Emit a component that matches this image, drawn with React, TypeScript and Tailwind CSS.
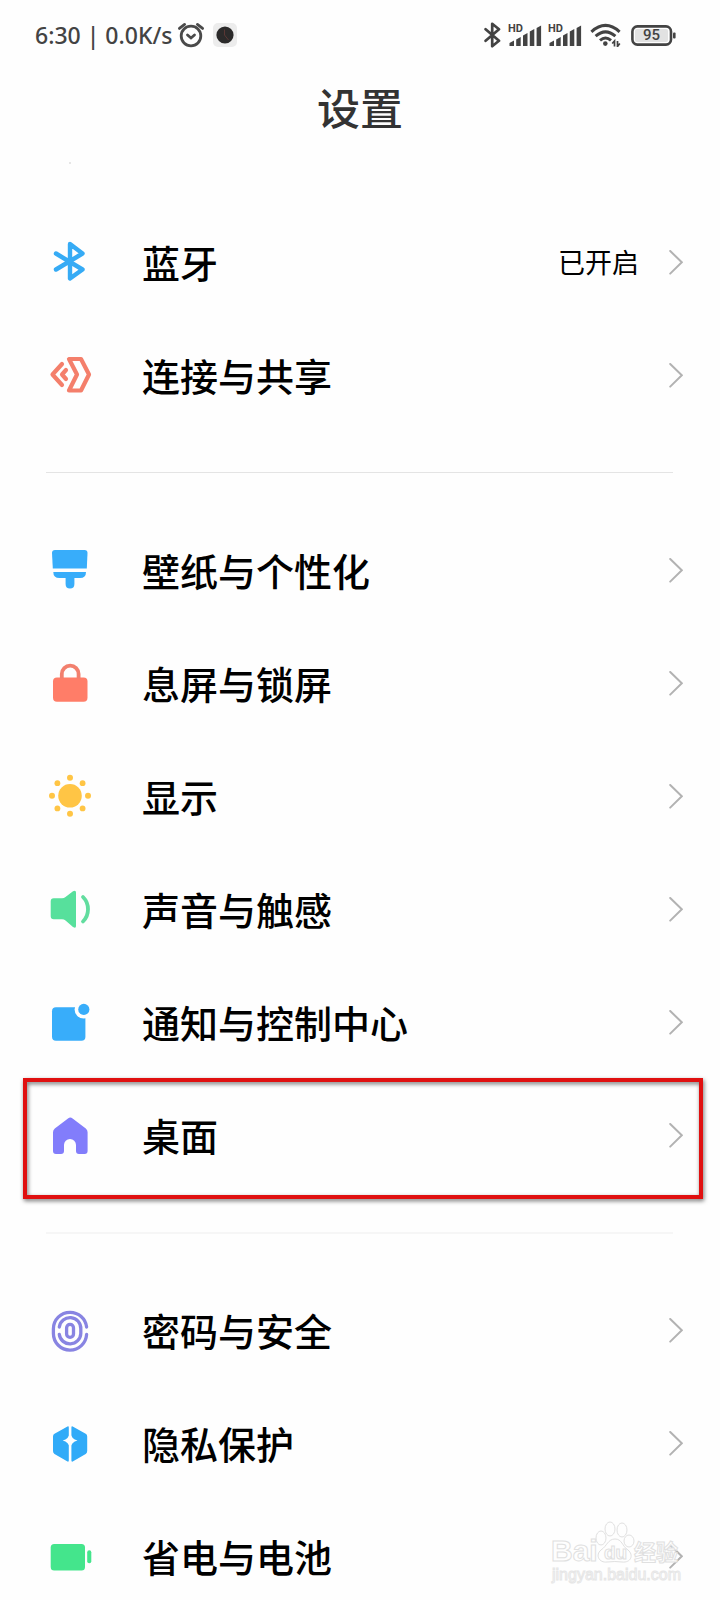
import type { ReactNode } from "react";

type Item = {
  label: string;
  icon: ReactNode;
  value?: string;
  marked?: boolean;
};

// every icon is drawn on the same 44x45 canvas
const bluetooth = (
  <path
    d="M8 13.5 34.5 29.5 22 38.5V4L34.5 13.5 8 29.5"
    fill="none"
    stroke="#36abf5"
    strokeWidth="4.4"
    strokeLinecap="round"
    strokeLinejoin="round"
  />
);

const share = (
  <g
    fill="none"
    stroke="#f47f6b"
    strokeWidth="4.2"
    strokeLinecap="round"
    strokeLinejoin="round"
  >
    <path d="M21 6H33L41 21.5 33 37.5H21L29 21.5Z" />
    <path d="M14 11 4.5 21.5 14 32" />
    <path d="M18 17 14 21.5 18 26" />
  </g>
);

const brush = (
  <g fill="#38adfa">
    <path d="M7 2H36.5Q39.5 2 39.5 5L38.8 20.5H4.8L4 5Q4 2 7 2Z" />
    <path d="M5.3 24H38Q38 30 32 30H26.4V36Q26.4 40.5 22 40.5T17.6 36V30H11.5Q5.3 30 5.3 24Z" />
  </g>
);

const lock = (
  <g>
    <rect x="5" y="16.5" width="34.5" height="24.3" rx="4" fill="#ff7d68" />
    <path
      d="M13.8 17.5V13A8.4 8.4 0 0 1 30.6 13V17.5"
      fill="none"
      stroke="#f2806e"
      strokeWidth="3.8"
    />
  </g>
);

const sun = (
  <g fill="#ffc545">
    <circle cx="22" cy="21.8" r="11.8" />
    <circle cx="22" cy="3.8" r="3" />
    <circle cx="22" cy="39.8" r="3" />
    <circle cx="4" cy="21.8" r="3" />
    <circle cx="40" cy="21.8" r="3" />
    <circle cx="9.4" cy="9.2" r="2.9" />
    <circle cx="34.6" cy="9.2" r="2.9" />
    <circle cx="9.4" cy="34.4" r="2.9" />
    <circle cx="34.6" cy="34.4" r="2.9" />
  </g>
);

const speaker = (
  <g>
    <path
      d="M5.7 11.3H14Q16 11.3 17.5 10L25 4.3Q28 2.8 28 5.5V39Q28 42 25 40L17.5 33.5Q16 32.3 14 32.3H5.7Q2.7 32.3 2.7 29.3V14.3Q2.7 11.3 5.7 11.3Z"
      fill="#57e09c"
    />
    <path
      d="M35 10Q40 15 40 22.3T35 34.5"
      fill="none"
      stroke="#62dd9f"
      strokeWidth="3.8"
      strokeLinecap="round"
    />
  </g>
);

const notification = (
  <g>
    <rect x="4" y="7.3" width="33.4" height="33.4" rx="4" fill="#38adfa" />
    <circle cx="35.8" cy="9.4" r="9.2" fill="#fefefe" />
    <circle cx="35.8" cy="9.4" r="5.6" fill="#38adfa" />
  </g>
);

const home = (
  <path
    d="M20 5.4Q22.3 3.8 24.6 5.4L37.8 15.4Q39.6 16.8 39.6 19.3V38Q39.6 41 36.6 41H31Q28 41 28 38V32A6 6 0 0 0 16 32V38Q16 41 13 41H8Q5 41 5 38V19.3Q5 16.8 6.8 15.4Z"
    fill="#827dfb"
  />
);

const fingerprint = (
  <g fill="none" stroke="#8884e2" strokeWidth="3.3" strokeLinecap="round">
    <path d="M38.6 19A16.6 16.6 0 0 0 22 4.3 16.6 16.6 0 0 0 5.4 20.9V25.5A16.6 16.6 0 0 0 22 42.1 16.6 16.6 0 0 0 38.6 26.5" />
    <path d="M11.3 19A10.8 10.8 0 0 1 32.8 20.9V25.5A10.8 10.8 0 0 1 11.3 26.5" />
    <rect x="18.6" y="16.3" width="6.9" height="13" rx="3.4" />
  </g>
);

const privacy = (
  <g>
    <path
      d="M19.5 5.5 6.5 12.7Q5 13.5 5 15.5V30Q5 32 6.5 32.9L19.5 40.5Q20.8 41.1 20.8 39.5V6.5Q20.8 4.9 19.5 5.5Z"
      fill="#31abf8"
    />
    <path
      d="M24.7 5.5 37.7 12.7Q39.2 13.5 39.2 15.5V30Q39.2 32 37.7 32.9L24.7 40.5Q23.4 41.1 23.4 39.5V6.5Q23.4 4.9 24.7 5.5Z"
      fill="#31abf8"
    />
    <path
      d="M22.1 11.5Q23.4 18.1 29.5 19.5 23.4 20.9 22.1 27.5 20.8 20.9 14.7 19.5 20.8 18.1 22.1 11.5Z"
      fill="#fefefe"
    />
  </g>
);

const battery = (
  <g fill="#44e58c">
    <rect x="2.7" y="10" width="34.3" height="26.6" rx="3.5" />
    <rect x="39.2" y="16.3" width="4.1" height="13" rx="2" />
  </g>
);

const groups: Item[][] = [
  [
    { label: "蓝牙", icon: bluetooth, value: "已开启" },
    { label: "连接与共享", icon: share },
  ],
  [
    { label: "壁纸与个性化", icon: brush },
    { label: "息屏与锁屏", icon: lock },
    { label: "显示", icon: sun },
    { label: "声音与触感", icon: speaker },
    { label: "通知与控制中心", icon: notification },
    { label: "桌面", icon: home, marked: true },
  ],
  [
    { label: "密码与安全", icon: fingerprint },
    { label: "隐私保护", icon: privacy },
    { label: "省电与电池", icon: battery },
  ],
];

function Signal() {
  return (
    <svg width="34" height="24" viewBox="0 0 34 24" fill="#434343">
      <text
        x="0"
        y="9"
        fontSize="11"
        fontWeight="700"
        fontFamily="Roboto, sans-serif"
      >
        HD
      </text>
      <path d="M1.5 23V20L6 17.5V23ZM8.2 23V16.5L12.7 14V23ZM15 23V12.5L19.5 10V23ZM21.8 23V8.5L26.3 6V23ZM28.6 23V5L33.1 2.5V23Z" />
    </svg>
  );
}

function StatusBar() {
  return (
    <div className="flex h-[70px] shrink-0 items-center justify-between pr-[44px] pl-[35px] text-[#434343]">
      <div className="flex items-center">
        <span className="font-['Noto_Sans',sans-serif] text-[23px] leading-8 font-medium whitespace-pre">
          6:30 | 0.0K/s
        </span>
        <svg
          className="ml-1"
          width="28"
          height="26"
          viewBox="0 0 28 26"
          fill="none"
          stroke="#4a4a4a"
          strokeWidth="2.8"
          strokeLinecap="round"
        >
          <circle cx="14" cy="14" r="9.8" />
          <path d="M2.4 6.4 7.6 2.4M20.4 2.4 25.6 6.4M10.5 13 14 16 17.5 13" />
        </svg>
        <svg className="ml-2" width="24" height="24" viewBox="0 0 24 24">
          <rect width="24" height="24" rx="5" fill="#ececec" />
          <circle cx="12" cy="12" r="8.6" fill="#2b2a2a" />
          <path d="M11.5 6.5V12L15.5 17" fill="none" stroke="#5a3734" />
        </svg>
      </div>
      <div className="flex items-center">
        <svg
          width="17"
          height="26"
          viewBox="0 0 17 26"
          fill="none"
          stroke="#434343"
          strokeWidth="2.7"
          strokeLinejoin="round"
          strokeLinecap="round"
        >
          <path d="M1.6 7.2 15 18.8 8.2 24.2V1.8L15 7.2 1.6 18.8" />
        </svg>
        <div className="ml-[7px] flex gap-[6px]">
          <Signal />
          <Signal />
        </div>
        <svg
          className="ml-2"
          width="32"
          height="24"
          viewBox="0 0 32 24"
          fill="none"
          stroke="#434343"
          strokeWidth="3"
        >
          <path d="M1.4 8.8Q15.5-4 29.6 8.8M5.6 13.2Q15.5 4.6 25.4 13.2M10 17.4Q15.5 12.6 21 17.4" />
          <circle cx="15.3" cy="20.6" r="2.3" fill="#434343" stroke="none" />
          <path
            d="M22.2 20.5 24.5 18V23.5M27.5 18V23.5L29.8 20.5"
            strokeWidth="1.7"
          />
        </svg>
        <div className="relative ml-[9px] flex items-center">
          <svg width="45" height="21" viewBox="0 0 45 21">
            <rect x="4" y="4" width="33" height="13" rx="2" fill="#e2e2e2" />
            <rect
              x="1.4"
              y="1.4"
              width="38.6"
              height="18.2"
              rx="5"
              fill="none"
              stroke="#434343"
              strokeWidth="2.6"
            />
            <rect x="42" y="7.5" width="2.6" height="6" rx="1" fill="#434343" />
          </svg>
          <span className="absolute inset-y-0 left-0 w-[41px] text-center font-['Roboto',sans-serif] text-[15px] leading-[21px] font-medium">
            95
          </span>
        </div>
      </div>
    </div>
  );
}

function Row({ label, icon, value, marked }: Item) {
  return (
    <li className="relative">
      <button
        type="button"
        className="flex h-[113px] w-full items-center pr-[37px] pl-12 text-left"
      >
        <svg
          className="shrink-0"
          width="44"
          height="45"
          viewBox="0 0 44 45"
          aria-hidden="true"
        >
          {icon}
        </svg>
        <span className="ml-[50px] flex-1 pb-[2px] text-[38px] leading-[55px] font-medium">
          {label}
        </span>
        {value && (
          <span className="mr-[30px] pb-[2px] text-[27px] leading-[39px]">
            {value}
          </span>
        )}
        <svg
          className="shrink-0"
          width="14"
          height="25"
          viewBox="0 0 14 25"
          fill="none"
          stroke="#b2b2b2"
          strokeWidth="2"
          strokeLinecap="round"
          aria-hidden="true"
        >
          <path d="M1.2 1 12.8 12.3 1.2 23.6" />
        </svg>
      </button>
      {marked && (
        <div className="pointer-events-none absolute inset-x-0 -top-px -bottom-[7px] mr-[17px] ml-[23px] border-4 border-[#e01010] drop-shadow-[1px_2px_2px_rgba(0,0,0,0.55)]" />
      )}
    </li>
  );
}

function Watermark() {
  return (
    <div className="pointer-events-none absolute right-[36px] bottom-[12px]">
      <svg
        width="134"
        height="70"
        viewBox="0 0 134 70"
        fill="#fefefe"
        stroke="#e0e0e0"
        strokeWidth="1"
      >
        <g fontFamily="'Liberation Sans', 'Noto Sans CJK SC', sans-serif">
          <text x="1" y="43" fontSize="30" fontWeight="700">
            Bai
          </text>
          <ellipse cx="51" cy="20" rx="5" ry="7" />
          <ellipse cx="60" cy="11" rx="5" ry="7" />
          <ellipse cx="72" cy="12" rx="5" ry="7" />
          <ellipse cx="79" cy="23" rx="5" ry="6" />
          <path d="M65 21C58 21 57 28 51 32 45 37 49 45 57 44Q65 43 72 44C81 45 84 37 78 32 72 28 72 21 65 21Z" />
          <text x="54" y="41" fontSize="19" fontWeight="700">
            du
          </text>
          <text x="84" y="42" fontSize="22" fontWeight="700">
            经验
          </text>
          <text x="2" y="62" fontSize="16" stroke="#e6e6e6">
            jingyan.baidu.com
          </text>
        </g>
      </svg>
    </div>
  );
}

export default function App() {
  return (
    <div className="relative flex h-screen flex-col overflow-hidden bg-[#fefefe] font-['Noto_Sans_CJK_SC',sans-serif] text-black">
      <StatusBar />
      <h1 className="pt-1 pb-2 text-center text-[43px] leading-[64px] font-medium text-[#333333]">
        设置
      </h1>
      {/* tip of the row that has scrolled under the title */}
      <div className="h-[60px] shrink-0 pt-4 pl-[69px]">
        <div className="size-[2px] rounded-full bg-[#dedede]" />
      </div>
      <main>
        {groups.map((items, i) => (
          <section key={i}>
            {i > 0 && (
              <div className="h-[82px] pt-10 pr-[47px] pl-[46px]">
                <hr
                  className={
                    i === 1
                      ? "border-t border-[#e4e4e4]"
                      : "border-t-2 border-[#f6f6f6]"
                  }
                />
              </div>
            )}
            <ul>
              {items.map((item) => (
                <Row key={item.label} {...item} />
              ))}
            </ul>
          </section>
        ))}
      </main>
      <Watermark />
    </div>
  );
}
